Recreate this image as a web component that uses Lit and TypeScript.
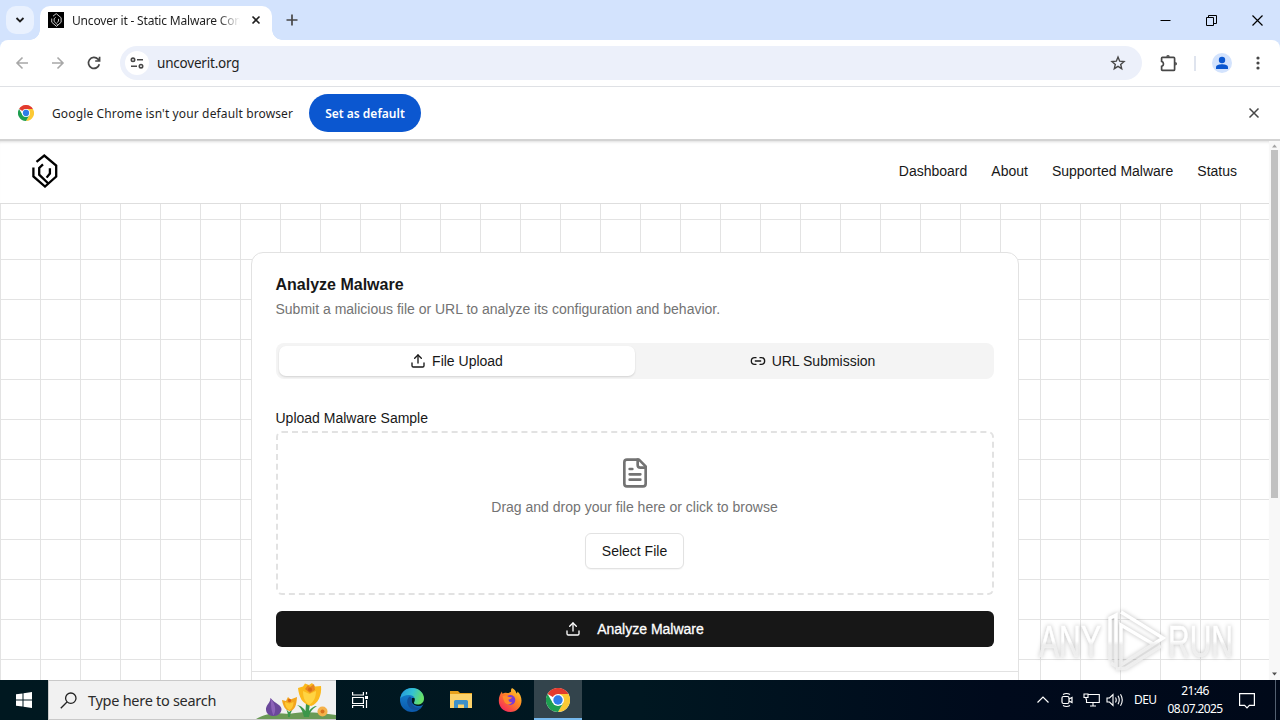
import { LitElement, html, css, svg } from 'lit';
import { customElement, property, state } from 'lit/decorators.js';
import { classMap } from 'lit/directives/class-map.js';

const chromeLogo = svg`
  <circle cx="24" cy="24" r="22" fill="#fff"/>
  <path d="M24 24 4.9 13A22 22 0 0 1 43.1 13H24z" fill="#e33b2e"/>
  <path d="M24 13H43.1A22 22 0 0 1 24 46L33.5 29.5z" fill="#fcc934"/>
  <path d="M4.9 13A22 22 0 0 0 24 46L33.5 29.5 14.5 29.5z" fill="#1e9e50"/>
  <circle cx="24" cy="24" r="11" fill="#fff"/>
  <circle cx="24" cy="24" r="8.6" fill="#2f7de9"/>
`;

const brandMark = svg`
  <path d="M4.5 7.8 12.3 1.5 24.2 11.5V22.5L13 32.5 1.4 22.4V13.500"/>
  <path d="M11 10.400 7.200 14V20.700L16.300 29.500"/>
  <path d="M17.900 14.200V19.500L14.600 23.600"/>
`;

const uploadIcon = svg`
  <path d="M12 3v12"/><path d="m17 8-5-5-5 5"/>
  <path d="M21 15v4a2 2 0 0 1-2 2H5a2 2 0 0 1-2-2v-4"/>
`;

@customElement('browser-chrome')
export class BrowserChrome extends LitElement {
  static styles = css`
    :host {
      display: block;
      font-family: 'Noto Sans', 'Open Sans', sans-serif;
      color: #1f1f1f;
      background: #d3e3fd;
    }

    svg {
      display: block;
      fill: none;
      stroke: #474747;
      flex: none;
    }

    .tabs {
      display: flex;
      height: 40px;
      align-items: center;
    }

    .tab-search {
      width: 28px;
      height: 28px;
      margin: 0 6px;
      border-radius: 10px;
      background: #e9f1fe;
      display: grid;
      place-items: center;
    }

    .dark {
      stroke: #1f1f1f;
    }

    .tab {
      align-self: flex-end;
      position: relative;
      display: flex;
      align-items: center;
      box-sizing: border-box;
      width: 232px;
      height: 34px;
      padding: 0 11px 6px 8px;
      background: #fff;
      border-radius: 10px 10px 0 0;
    }

    .tab::before,
    .tab::after {
      content: '';
      position: absolute;
      bottom: 0;
      width: 10px;
      height: 10px;
    }

    .tab::before {
      left: -10px;
      background: radial-gradient(circle at 0 0, transparent 9.5px, #fff 10px);
    }

    .tab::after {
      right: -10px;
      background: radial-gradient(circle at 100% 0, transparent 9.5px, #fff 10px);
    }

    .favicon {
      width: 16px;
      height: 16px;
      background: #000;
      display: grid;
      place-items: center;
    }

    .favicon svg {
      stroke: #fff;
    }

    .title {
      width: 168px;
      margin: 2px 11px 0 8px;
      white-space: nowrap;
      font-size: 12px;
      line-height: 16px;
      letter-spacing: -0.18px;
      -webkit-mask-image: linear-gradient(90deg, #000 146px, transparent 168px);
      mask-image: linear-gradient(90deg, #000 146px, transparent 168px);
    }

    .new-tab {
      margin-left: 14px;
    }

    .window {
      display: flex;
      margin-left: auto;
    }

    .window svg {
      margin-right: 35px;
      stroke: #000;
    }

    .window svg:last-child {
      margin-right: 17px;
    }

    .toolbar {
      display: flex;
      align-items: center;
      box-sizing: border-box;
      height: 47px;
      padding: 0 16px 0 15px;
      border-bottom: 1px solid #dfe1e5;
      background: #fff;
      border-radius: 8px 8px 0 0;
    }

    .nav {
      display: flex;
      gap: 22px;
      margin-right: 19px;
    }

    .dim {
      stroke: #a8a8a8;
    }

    .omnibox {
      flex: none;
      display: flex;
      align-items: center;
      box-sizing: border-box;
      width: 1022px;
      height: 34px;
      padding: 0 16px 0 5px;
      border-radius: 17px;
      background: #ecf0fa;
    }

    .site {
      width: 24px;
      height: 24px;
      border-radius: 50%;
      background: #fff;
      display: grid;
      place-items: center;
      margin-right: 8px;
    }

    .url {
      flex: 1;
      font-size: 13.5px;
      line-height: 20px;
      letter-spacing: -0.2px;
    }

    .ext {
      margin-left: 18px;
    }

    .sep {
      width: 2px;
      height: 15px;
      margin: 0 16px;
      background: #dfe4ee;
    }

    .dots {
      margin-left: 24px;
    }

    .infobar {
      display: flex;
      align-items: center;
      box-sizing: border-box;
      height: 54px;
      padding: 0 20px 0 18px;
      background: #fff;
      border-bottom: 2px solid #d3d3d3;
      font-size: 12px;
    }

    .message {
      margin: 0 16px 0 18px;
      width: 241px;
      white-space: nowrap;
      letter-spacing: 0.13px;
    }

    .default {
      border: 0;
      width: 112px;
      height: 38px;
      padding: 0;
      border-radius: 19px;
      background: #0b57d0;
      color: #fff;
      font: 600 12px 'Noto Sans', sans-serif;
      letter-spacing: 0;
      margin-right: auto;
    }
  `;

  render() {
    return html`
      <div class="tabs">
        <div class="tab-search">
          <svg class="dark" width="10" height="6" stroke-width="1.800"><path d="m1.500 1 3.500 3.500L8.500 1"/></svg>
        </div>
        <div class="tab">
          <div class="favicon">
            <svg width="11" height="14" viewBox="0 0 26 34" stroke-width="1.900">${brandMark}</svg>
          </div>
          <div class="title">Uncover it - Static Malware Con</div>
          <svg class="dark" width="10" height="10" stroke-width="1.600"><path d="m1.500 1.500 7 7m0-7-7 7"/></svg>
        </div>
        <svg class="new-tab" width="12" height="12" stroke-width="1.700"><path d="M6 .5v11M.5 6h11"/></svg>
        <div class="window">
          <svg width="11" height="11"><path d="M.5 5.500h10"/></svg>
          <svg width="11" height="11"><path d="M.5 2.500h7v8h-7zM2.500 2.500v-2h8v8h-3"/></svg>
          <svg width="11" height="11" stroke-width="1.200"><path d="m.5.5 10 10m0-10-10 10"/></svg>
        </div>
      </div>
      <div class="toolbar">
        <div class="nav">
          <svg class="dim" width="14" height="14" stroke-width="1.600"><path d="M13 7H2m5.500-5.500L2 7l5.500 5.500"/></svg>
          <svg class="dim" width="14" height="14" stroke-width="1.600"><path d="M1 7h11M6.500 1.500 12 7l-5.500 5.500"/></svg>
          <svg width="14" height="14" stroke-width="1.700"><path d="M12.300 8.200A5.500 5.500 0 1 1 11 3.200L12.600 5M12.600.8V5H8.200"/></svg>
        </div>
        <div class="omnibox">
          <div class="site">
            <svg width="14" height="12" stroke-width="1.600"><circle cx="3" cy="2.800" r="1.700"/><path d="M7 2.800h6M1 9.200h6"/><circle cx="11" cy="9.200" r="1.700"/></svg>
          </div>
          <span class="url">uncoverit.org</span>
          <svg width="16" height="16" stroke-width="1.400"><path d="m8 2 1.700 4.200 4.300.3-3.300 2.900 1 4.300L8 11.400l-3.700 2.300 1-4.300L2 6.500l4.300-.3z"/></svg>
        </div>
        <svg class="ext" width="18" height="18" stroke-width="1.700"><path d="M2.400 3.400h11.200a1 1 0 0 1 1 1v11a1 1 0 0 1-1 1H2.400a.8.800 0 0 1-.8-.8v-3.200a2.600 2.600 0 0 0 0-5V4.200a.8.800 0 0 1 .8-.8z"/><path d="M6.200 2.800a1.800 1.800 0 0 1 3.600 0zM15.200 8a1.800 1.800 0 0 1 0 3.600z" fill="#474747" stroke="none"/></svg>
        <div class="sep"></div>
        <svg width="20" height="20"><g stroke="none" fill="#0b57d0"><circle cx="10" cy="10" r="10" fill="#d3e3fd"/><circle cx="10" cy="7" r="3.200"/><path d="M4 16v-1.800c0-2.200 3.500-3 6-3s6 .8 6 3V16z"/></g></svg>
        <svg class="dots" width="4" height="14"><g fill="#474747" stroke="none"><circle cx="2" cy="2" r="1.600"/><circle cx="2" cy="7" r="1.600"/><circle cx="2" cy="12" r="1.600"/></g></svg>
      </div>
      <div class="infobar">
        <svg width="16" height="16" viewBox="2 2 44 44"><g stroke="none">${chromeLogo}</g></svg>
        <span class="message">Google Chrome isn't your default browser</span>
        <button class="default">Set as default</button>
        <svg width="12" height="12" stroke-width="1.500"><path d="m1.500 1.500 9 9m0-9-9 9"/></svg>
      </div>
    `;
  }
}

@customElement('upload-page')
export class UploadPage extends LitElement {
  static styles = css`
    :host {
      display: flex;
      overflow: hidden;
      background: #fff;
      color: #171717;
      font-family: 'Liberation Sans', Arial, sans-serif;
      font-size: 14px;
      line-height: 20px;
    }

    svg {
      display: block;
      fill: none;
      stroke: currentColor;
      stroke-width: 2;
      stroke-linecap: round;
      stroke-linejoin: round;
      flex: none;
    }

    .page {
      flex: 1;
      display: flex;
      flex-direction: column;
      min-width: 0;
      box-shadow: inset 0 3px 3px -2px #ddd;
    }

    header {
      flex: none;
      display: flex;
      align-items: center;
      justify-content: space-between;
      box-sizing: border-box;
      height: 63px;
      padding: 0 32px 2px;
      border-bottom: 1px solid #dedede;
    }

    header svg {
      stroke: #000;
      stroke-width: 2.3;
      stroke-linecap: butt;
      stroke-linejoin: miter;
    }

    nav {
      display: flex;
      gap: 24px;
    }

    main {
      flex: 1;
      min-height: 0;
      padding-top: 48px;
      background-image: linear-gradient(90deg, #e3e3e3 1px, transparent 1px),
        linear-gradient(#e3e3e3 1px, transparent 1px);
      background-size: 40px 40px;
      background-position: 0 15px;
    }

    .card {
      box-sizing: border-box;
      width: 768px;
      height: 520px;
      margin: 0 auto;
      border: 1px solid #e2e2e2;
      border-radius: 12px;
      background: #fff;
    }

    .body {
      height: 419px;
      box-sizing: border-box;
      padding: 24px 24px 0;
      border-bottom: 1px solid #e2e2e2;
    }

    h1 {
      margin: 0;
      font-size: 16px;
      line-height: 16px;
    }

    .lead {
      margin: 6px 0 24px;
      color: #737373;
    }

    .tabs {
      display: flex;
      height: 36px;
      box-sizing: border-box;
      padding: 3px;
      border-radius: 8px;
      background: #f4f4f4;
    }

    .tab {
      flex: 1;
      display: flex;
      align-items: center;
      justify-content: center;
      gap: 6px;
      border-radius: 7px;
      cursor: pointer;
    }

    .tab.active {
      background: #fff;
      box-shadow: 0 1px 2px rgba(0, 0, 0, 0.14);
    }

    .label {
      margin-top: 29px;
    }

    .drop {
      box-sizing: border-box;
      height: 164px;
      margin-top: 3px;
      padding-top: 24px;
      border: 2px dashed #e2e2e2;
      border-radius: 6px;
      display: flex;
      flex-direction: column;
      align-items: center;
      color: #737373;
    }

    .hint {
      margin: 8px 0 16px;
    }

    button {
      font: inherit;
      border-radius: 6px;
      cursor: pointer;
    }

    .select {
      box-sizing: border-box;
      width: 99px;
      height: 36px;
      padding: 0;
      border: 1px solid #e2e2e2;
      background: #fff;
      color: #171717;
      box-shadow: 0 1px 1px rgba(0, 0, 0, 0.04);
    }

    .analyze {
      display: flex;
      align-items: center;
      justify-content: center;
      gap: 16px;
      width: 100%;
      height: 36px;
      margin-top: 16px;
      border: 0;
      background: #171717;
      color: #fff;
      -webkit-text-stroke: 0.3px #fff;
    }

    .scrollbar {
      width: 11px;
      display: flex;
      flex-direction: column;
      align-items: center;
      justify-content: space-between;
      background: #f8f8f8;
    }

    .arrow {
      width: 11px;
      height: 9px;
      fill: #a3a3a3;
      stroke: none;
    }

    .arrow.down {
      height: 11px;
      fill: #505050;
    }

    .thumb {
      width: 7px;
      height: 348px;
      margin-bottom: auto;
      background: #c1c1c1;
    }
  `;

  @state() private mode = 'file';

  render() {
    return html`
      <div class="page">
        <header>
          <svg width="26" height="34" viewBox="0 0 26 34">${brandMark}</svg>
          <nav><span>Dashboard</span><span>About</span><span>Supported Malware</span><span>Status</span></nav>
        </header>
        <main>
          <div class="card">
            <div class="body">
              <h1>Analyze Malware</h1>
              <div class="lead">Submit a malicious file or URL to analyze its configuration and behavior.</div>
              <div class="tabs">
                <div class=${classMap({ tab: true, active: this.mode === 'file' })} @click=${() => (this.mode = 'file')}>
                  <svg width="16" height="16" viewBox="0 0 24 24">${uploadIcon}</svg>File Upload
                </div>
                <div class=${classMap({ tab: true, active: this.mode === 'url' })} @click=${() => (this.mode = 'url')}>
                  <svg width="16" height="16" viewBox="0 0 24 24"><path d="M9 17H7A5 5 0 0 1 7 7h2M15 7h2a5 5 0 1 1 0 10h-2M8 12h8"/></svg>URL Submission
                </div>
              </div>
              <div class="label">Upload Malware Sample</div>
              <div class="drop">
                <svg width="32" height="32" viewBox="0 0 24 24"><path d="M15 2H6a2 2 0 0 0-2 2v16a2 2 0 0 0 2 2h12a2 2 0 0 0 2-2V7Z"/><path d="M14 2v4a2 2 0 0 0 2 2h4M10 9H8M16 13H8M16 17H8"/></svg>
                <div class="hint">Drag and drop your file here or click to browse</div>
                <button class="select">Select File</button>
              </div>
              <button class="analyze">
                <svg width="16" height="16" viewBox="0 0 24 24">${uploadIcon}</svg>Analyze Malware
              </button>
            </div>
          </div>
        </main>
      </div>
      <div class="scrollbar">
        <svg class="arrow" viewBox="0 0 11 9"><path d="m3 6.500 2.500-3L8 6.500z"/></svg>
        <div class="thumb"></div>
        <svg class="arrow down" viewBox="0 0 11 11"><path d="M3 3.500h5L5.500 6.500z"/></svg>
      </div>
    `;
  }
}

@customElement('task-bar')
export class TaskBar extends LitElement {
  static styles = css`
    :host {
      display: flex;
      background: linear-gradient(90deg, #001820 0%, #001721 50%, #000a1c 78%, #000919 100%);
      color: #fff;
      font-family: 'Noto Sans', 'Open Sans', sans-serif;
    }

    svg {
      display: block;
      fill: none;
      flex: none;
    }

    .cell {
      width: 48px;
      display: grid;
      place-items: center;
    }

    .task-view {
      margin-right: 3px;
    }

    .app {
      width: 49px;
    }

    .open {
      width: 48px;
      box-sizing: border-box;
      padding-top: 2px;
      background: #33444c;
      border-bottom: 2px solid #76b9ed;
    }

    .search {
      display: flex;
      align-items: center;
      box-sizing: border-box;
      width: 288px;
      padding-left: 11px;
      background: #f1f1f1;
      border: 1px solid #c9c9c9;
      border-right: 0;
      color: #2b2b2b;
      font-size: 14.5px;
      white-space: nowrap;
    }

    .query {
      margin-left: 11px;
      flex: 1;
      letter-spacing: -0.28px;
    }

    .tray {
      margin-left: auto;
      display: flex;
      align-items: center;
      font-size: 12px;
      line-height: 18px;
    }

    .tray svg {
      stroke: #fff;
    }

    .icons {
      display: flex;
      align-items: center;
    }

    .camera {
      margin: 0 10px 0 11px;
    }

    .volume {
      margin-left: 6px;
    }

    .lang {
      width: 22px;
      margin: 0 11px 0 10px;
      letter-spacing: -0.6px;
    }

    .clock {
      width: 56px;
      text-align: center;
      letter-spacing: -0.65px;
      white-space: nowrap;
    }

    .notice {
      margin: 2px 20px 0 16px;
    }

    .peek {
      align-self: stretch;
      width: 4px;
      border-left: 1px solid #536070;
    }
  `;

  render() {
    return html`
      <div class="cell">
        <svg width="16" height="16"><path fill="#fff" d="M0 2.300 6.500 1.400V7.500H0zM7.500 1.200 16 0v7.500H7.500zM0 8.500h6.500v6.100L0 13.700zM7.500 8.500H16V16l-8.500-1.200z"/></svg>
      </div>
      <div class="search">
        <svg width="17" height="17" stroke="#222" stroke-width="1.300"><circle cx="10.800" cy="6.200" r="5.200"/><path d="M7 10 .8 16.200"/></svg>
        <span class="query">Type here to search</span>
        <svg width="80" height="38" viewBox="0 0 80 38">
          <path d="M0 38C12 31 22 32 33 33 46 30 62 31 80 34V38z" fill="#6a9a56"/>
          <path d="M14.500 17c0 5-5 7-4.500 12 .5 4 4 6 8 6s7.500-3 7.500-7-6-5-11-11z" fill="#6b489b"/>
          <path d="M14.500 17c1 7 0 11 3 17.500 3-5 2-11-3-17.500z" fill="#8c63b8"/>
          <path d="M32 36c0-4-1-6-2-8l3 3 4-3c-2 3-3 5-3 8zM48 36c-2-8-4-10-7-12 5 1 7 4 8.500 6L50 22h4l-1 8c2-3 5-5 8-5-5 3-7 6-8 11z" fill="#3b964a"/>
          <path d="M26 19l4 1 2-4 2.500 2.500L41 16c-.5 8-2 13-7 14-5-1-7-5-8-11z" fill="#f3a51d"/>
          <path d="M29 21c0 4 2 7 4.500 8 3-1 4-5 4-8l-4 1.500z" fill="#ffc935"/><circle cx="33.500" cy="19.500" r="1.700" fill="#dd680f"/>
          <path d="M42 7l5-1.500 2-3 4 1.500 3-2 3 3.500 6-.5c1 9-3 18-10 20-9-2-12-9-13-18z" fill="#fbb91d"/>
          <path d="M47 10c0 7 2 11 6 14 5-3 7-8 7-14l-6.500 3z" fill="#ffd443"/><path d="m49 8 3-4 2 2 4-3 1 6-5 3z" fill="#e88622"/><circle cx="54" cy="8.500" r="2" fill="#d86b16"/>
          <circle cx="66.500" cy="30.500" r="5" fill="#f4b14a"/><circle cx="66.500" cy="30.500" r="2" fill="#d9721d"/>
        </svg>
      </div>
      <div class="cell task-view">
        <svg width="16" height="16" stroke="#fff" stroke-width="1.200"><path d="M.6 0v3h10.800V0M.6 5.500h10.800v6H.6zM.6 16v-2.500h10.800V16M14.500 0v2.500M14.500 8v8"/><path d="M13 4h3v3h-3z" fill="#fff" stroke="none"/></svg>
      </div>
      <div class="cell app">
        <svg width="24" height="24">
          <defs>
            <linearGradient id="sea" x1="0" y1="0" x2="1" y2=".3"><stop stop-color="#2393dd"/><stop offset=".55" stop-color="#33c2d4"/><stop offset="1" stop-color="#66e067"/></linearGradient>
            <linearGradient id="deep" x1="0" y1="0" x2="0" y2="1"><stop stop-color="#1787d6"/><stop offset="1" stop-color="#0b58aa"/></linearGradient>
          </defs>
          <circle cx="12" cy="12" r="12" fill="url(#deep)"/>
          <path d="M12 10c-1.500 3 0 7 5 8 2.500.4 4.500-.4 6.200-1.500L26 10z" fill="#001820"/>
          <path d="M.3 10.500C1.500 4 6 0 12 0c7 0 12 5 12 10.500 0 4-3 6-6.500 6-3 0-4-1.200-3.500-2 2-3 .5-7.500-5-7.500-4 0-7 1.500-8.700 3.500z" fill="url(#sea)"/>
          <path d="M9.500 8.500c-5 4-1.500 13 5.500 13.500 3 .2 5-1 6.500-2.500-5 1.500-11-2-9.500-7.500 0-1-1-3-2.500-3.500z" fill="#12509a"/>
        </svg>
      </div>
      <div class="cell app">
        <svg width="22" height="20"><path d="M0 1h8l2 2h12v3H0z" fill="#e8a11c"/><path d="M0 4h22v14H0z" fill="#fcd26a"/><path d="M4 18v-6.500a1.500 1.500 0 0 1 1.500-1.500h11a1.500 1.500 0 0 1 1.500 1.500V18h-4v-3.500H8V18z" fill="#3d90c9"/></svg>
      </div>
      <div class="cell app">
        <svg width="24" height="24">
          <defs><linearGradient id="fire" x1="1" y1="0" x2=".2" y2="1"><stop stop-color="#ffe03a"/><stop offset=".45" stop-color="#ff8a22"/><stop offset="1" stop-color="#f5245e"/></linearGradient></defs>
          <path d="M14 0c3 1.500 4 3.500 4.500 5.500.8-.5 1-1.300 1-2 2.500 2 4 5.500 4 9A11.300 11.300 0 0 1 12 24C5.500 24 .8 19 .8 12.800.8 9 2 6 4 3.500c0 1 .2 1.700.6 2.300C6 4.500 7.500 4.500 9 5c1.500 0 3-.3 4-1.200C12.800 2.300 13 1 14 0z" fill="url(#fire)"/>
          <circle cx="12.300" cy="12" r="5" fill="#7a3bd6"/>
          <path d="M4.500 8c2-1 4.500-.5 6.500 1l3 .3c-.5 1.500-2 1.800-3.500 2.200 0 2 1.500 3 3.500 2.500-1 3.500-6 3-7.500 0C5.500 12 5 10 4.500 8z" fill="#ff8a2c"/>
        </svg>
      </div>
      <div class="cell open">
        <svg width="24" height="24" viewBox="2 2 44 44">${chromeLogo}</svg>
      </div>
      <div class="tray">
        <div class="icons">
          <svg width="14" height="10" stroke-width="1.200"><path d="m1.500 7.500 5.500-5.500 5.500 5.500"/></svg>
          <svg class="camera" width="12" height="16" stroke-width="1.200"><rect x="1" y="4.500" width="7" height="7" rx="1.500"/><path d="m8 7 3-1.500v5L8 9M2 2.500q3.500-2 7 0M2 13.500q3.500 2 7 0"/></svg>
          <svg width="17" height="16" stroke-width="1.100"><path d="M5.500 2.500h10.800v8H3.500V7M7 14h6M10 10.500V14M1 2h4v3.500H1zM3 5.500v2"/></svg>
          <svg class="volume" width="18" height="16" stroke-width="1.100"><path d="M1 6h2.500L7 2.500v11L3.500 10H1zM9.500 5.500q1.500 2.500 0 5M12 3.800q2.500 4.200 0 8.400M14.500 2.200q3.500 5.800 0 11.600"/></svg>
        </div>
        <span class="lang">DEU</span>
        <div class="clock"><div>21:46</div><div>08.07.2025</div></div>
        <svg class="notice" width="16" height="16" stroke-width="1.200"><path d="M.6.6h14.800v11.800h-5L8 14.800 5.600 12.400h-5z"/></svg>
        <div class="peek"></div>
      </div>
    `;
  }
}

@customElement('any-watermark')
export class AnyWatermark extends LitElement {
  static styles = css`
    :host {
      display: block;
      pointer-events: none;
    }

    svg {
      display: block;
      overflow: visible;
      filter: drop-shadow(0 0 2px rgba(0, 0, 0, 0.26));
    }

    text {
      font: 45px 'Liberation Sans', sans-serif;
      fill: url(#fade);
      stroke: url(#fade);
      stroke-width: 0.6;
    }
  `;

  @property() left = 'ANY';
  @property() right = 'RUN';

  render() {
    return html`
      <svg width="204" height="66" viewBox="0 0 204 66">
        <defs>
          <linearGradient id="fade" gradientUnits="userSpaceOnUse" x1="0" y1="0" x2="0" y2="66">
            <stop offset=".5" stop-color="#fff"/><stop offset=".56" stop-color="#f1f1f1" stop-opacity=".85"/>
          </linearGradient>
        </defs>
        <text x="2" y="49" textLength="62" lengthAdjust="spacingAndGlyphs">${this.left}</text>
        <text x="131" y="49" textLength="65" lengthAdjust="spacingAndGlyphs">${this.right}</text>
        <g fill="none" stroke="url(#fade)" stroke-width="3.500"><path d="M84 4 126 30 84 57V17L116 36"/><path d="M73 52V10l6-3v51l-5-3M79 61l10-1 35-22"/></g>
      </svg>
    `;
  }
}

@customElement('app-root')
export class AppRoot extends LitElement {
  static styles = css`
    :host {
      position: relative;
      display: flex;
      flex-direction: column;
      width: 1280px;
      height: 720px;
      overflow: hidden;
    }

    browser-chrome {
      flex: none;
    }

    upload-page {
      flex: 1;
      min-height: 0;
    }

    task-bar {
      flex: none;
      height: 40px;
    }

    any-watermark {
      position: absolute;
      left: 1037px;
      top: 608px;
    }
  `;

  render() {
    return html`
      <browser-chrome></browser-chrome>
      <upload-page></upload-page>
      <task-bar></task-bar>
      <any-watermark></any-watermark>
    `;
  }
}
